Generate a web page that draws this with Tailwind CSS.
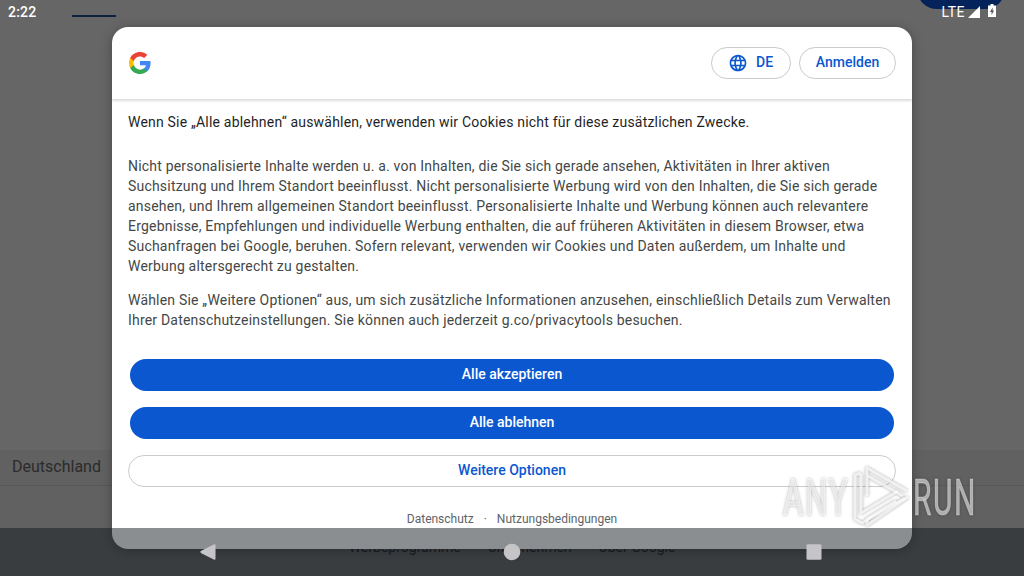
<!DOCTYPE html>
<html lang="de">
<head>
<meta charset="utf-8">
<title>Google</title>
<script src="https://cdn.jsdelivr.net/npm/@tailwindcss/browser@4"></script>
</head>
<body class="relative h-[576px] w-[1024px] overflow-hidden bg-[#666666] font-['Roboto',sans-serif]">
  <!-- Page behind the dialog -->
  <div class="flex h-full flex-col">
    <div class="flex h-[450px] items-start justify-between overflow-hidden">
      <div class="mt-[15px] ml-[72px] h-[2px] w-11 bg-[#0d2143]"></div>
      <div class="-mt-[31px] mr-[19px] h-10 w-[88px] rounded-full bg-[#04235a]"></div>
    </div>
    <div class="flex h-9 items-center border-b border-[#585858] bg-[#616161] px-3 pb-px text-base text-[#2b2b2b]">Deutschland</div>
    <div class="flex grow justify-center gap-[27px] bg-[#616161] pt-[51px] text-sm leading-5 text-[#1c1c1c]">
      <span>Werbeprogramme</span><span>Unternehmen</span><span>Über Google</span>
    </div>
  </div>

  <!-- Consent dialog -->
  <main class="absolute top-[27px] left-[112px] flex h-[522px] w-[800px] flex-col rounded-2xl bg-white shadow-[0_2px_12px_rgba(0,0,0,0.3)]">
    <header class="flex h-[72px] shrink-0 items-center justify-between px-4 shadow-[0_2px_2px_rgba(60,64,67,0.18)] [clip-path:inset(0_0_-6px_0)]">
      <svg class="size-6" viewBox="0 0 24 24">
        <path fill="#4285F4" d="M22.56 12.25c0-.78-.07-1.53-.2-2.25H12v4.26h5.92c-.26 1.37-1.04 2.53-2.21 3.31v2.77h3.57c2.08-1.92 3.28-4.74 3.28-8.09z"/>
        <path fill="#34A853" d="M12 23c2.97 0 5.46-.98 7.28-2.66l-3.57-2.77c-.98.66-2.23 1.06-3.71 1.06-2.86 0-5.29-1.93-6.16-4.53H2.18v2.84C3.99 20.53 7.7 23 12 23z"/>
        <path fill="#FBBC05" d="M5.84 14.09c-.22-.66-.35-1.36-.35-2.09s.13-1.43.35-2.09V7.07H2.18C1.43 8.55 1 10.22 1 12s.43 3.45 1.18 4.93l3.66-2.84z"/>
        <path fill="#EA4335" d="M12 5.38c1.62 0 3.06.56 4.21 1.64l3.15-3.15C17.45 2.09 14.97 1 12 1 7.7 1 3.99 3.47 2.18 7.07l3.66 2.84c.87-2.6 3.3-4.53 6.16-4.53z"/>
      </svg>
      <div class="flex gap-2 text-sm font-medium text-[#0b57d0]">
        <div class="flex h-8 w-20 items-center rounded-full border border-[#c9cbce] pl-4">
          <svg class="size-5" viewBox="0 0 24 24" fill="currentColor"><path d="M11.99 2C6.47 2 2 6.48 2 12s4.47 10 9.99 10C17.52 22 22 17.52 22 12S17.52 2 11.99 2zm6.93 6h-2.95a15.65 15.65 0 0 0-1.38-3.56A8.03 8.03 0 0 1 18.92 8zM12 4.04c.83 1.2 1.48 2.53 1.91 3.96h-3.82c.43-1.43 1.08-2.76 1.91-3.96zM4.26 14C4.1 13.36 4 12.69 4 12s.1-1.36.26-2h3.38c-.08.66-.14 1.32-.14 2s.06 1.34.14 2H4.26zm.82 2h2.95c.32 1.25.78 2.45 1.38 3.56A7.987 7.987 0 0 1 5.08 16zm2.95-8H5.08a7.987 7.987 0 0 1 4.33-3.56A15.65 15.65 0 0 0 8.03 8zM12 19.96c-.83-1.2-1.48-2.53-1.91-3.96h3.82c-.43 1.43-1.08 2.76-1.91 3.96zM14.34 14H9.66c-.09-.66-.16-1.32-.16-2s.07-1.35.16-2h4.68c.09.65.16 1.32.16 2s-.07 1.34-.16 2zm.25 5.56c.6-1.11 1.06-2.31 1.38-3.56h2.95a8.03 8.03 0 0 1-4.33 3.56zM16.36 14c.08-.66.14-1.32.14-2s-.06-1.34-.14-2h3.38c.16.64.26 1.31.26 2s-.1 1.36-.26 2h-3.38z"/></svg>
          <span class="mb-0.5 ml-2">DE</span>
        </div>
        <div class="flex h-8 w-[97px] items-center justify-center rounded-full border border-[#c9cbce] pb-0.5">Anmelden</div>
      </div>
    </header>
    <section class="flex flex-col px-4 pt-[13px] text-sm leading-5 tracking-[0.2px] whitespace-nowrap text-[#444746]">
      <p class="text-[#1f1f1f]">Wenn Sie „Alle ablehnen“ auswählen, verwenden wir Cookies nicht für diese zusätzlichen Zwecke.</p>
      <p class="mt-6">Nicht personalisierte Inhalte werden u. a. von Inhalten, die Sie sich gerade ansehen, Aktivitäten in Ihrer aktiven<br>Suchsitzung und Ihrem Standort beeinflusst. Nicht personalisierte Werbung wird von den Inhalten, die Sie sich gerade<br>ansehen, und Ihrem allgemeinen Standort beeinflusst. Personalisierte Inhalte und Werbung können auch relevantere<br>Ergebnisse, Empfehlungen und individuelle Werbung enthalten, die auf früheren Aktivitäten in diesem Browser, etwa<br>Suchanfragen bei Google, beruhen. Sofern relevant, verwenden wir Cookies und Daten außerdem, um Inhalte und<br>Werbung altersgerecht zu gestalten.</p>
      <p class="mt-3.5">Wählen Sie „Weitere Optionen“ aus, um sich zusätzliche Informationen anzusehen, einschließlich Details zum Verwalten<br>Ihrer Datenschutzeinstellungen. Sie können auch jederzeit g.co/privacytools besuchen.</p>
    </section>
    <div class="mt-[29px] flex flex-col gap-4 px-4 text-sm font-medium">
      <div class="mx-0.5 flex h-8 items-center justify-center rounded-full bg-[#0b57d0] pb-0.5 text-white">Alle akzeptieren</div>
      <div class="mx-0.5 flex h-8 items-center justify-center rounded-full bg-[#0b57d0] pb-0.5 text-white">Alle ablehnen</div>
      <div class="flex h-8 items-center justify-center rounded-full border border-[#c9cbce] pb-0.5 text-[#0b57d0]">Weitere Optionen</div>
    </div>
    <footer class="mt-6 flex justify-center gap-2.5 text-xs leading-4 text-[#5f6368]"><span>Datenschutz</span><span>·</span><span>Nutzungsbedingungen</span></footer>
  </main>

  <!-- Status bar -->
  <div class="absolute inset-x-0 top-0 flex h-6 items-center justify-between pr-7 pl-2 text-sm text-white">
    <span class="font-medium tracking-[0.2px]">2:22</span>
    <div class="flex items-center">
      <span class="tracking-[0.5px]">LTE</span>
      <svg class="ml-[3px] h-3 w-3" viewBox="0 0 12 12"><path d="M12 0v12H0z" fill="#fff"/></svg>
      <svg class="mb-[3px] ml-2 h-[13px] w-2" viewBox="0 0 8 13"><path d="M2.5 0h3v1.4H8V13H0V1.4h2.5z" fill="#fff"/><path d="M4.6 3.5 2 8h1.6v3L6 6.6H4.6z" fill="#555"/></svg>
    </div>
  </div>

  <!-- Android navigation bar -->
  <nav class="absolute inset-x-0 bottom-0 h-12 bg-[#12181e]/49">
    <svg class="h-12 w-full" viewBox="0 0 1024 48" fill="#c5c5c7"><path d="M201.3 22.8 213.8 16.4q1.7-.8 1.7 1v13.2q0 1.8-1.7 1L201.3 25.2q-2-1.2 0-2.4z"/><circle cx="512" cy="24" r="8.3"/><rect x="806.5" y="16.2" width="15" height="15.5" rx="1.2"/></svg>
  </nav>

  <!-- ANY.RUN watermark -->
  <svg class="absolute top-[456px] left-[772px] h-[84px] w-[212px] font-['Roboto',sans-serif] [filter:drop-shadow(0_0_1.5px_rgba(0,0,0,0.45))]" viewBox="772 456 212 84" fill="#fff" fill-opacity=".55" font-size="50">
    <text transform="translate(783 515) scale(.62 1)" stroke="#fff" stroke-opacity=".5" stroke-width="1" textLength="104" lengthAdjust="spacing">ANY</text>
    <text transform="translate(913 515) scale(.6 1)" stroke="#fff" stroke-opacity=".3" stroke-width="1" textLength="104" lengthAdjust="spacing">RUN</text>
    <g fill="none" stroke="#fff" stroke-opacity=".75" stroke-width="3" stroke-linejoin="round">
      <path d="M861 473 855 475V519L862 523 905 498"/>
      <path d="M861 474V513L898 491"/>
      <path d="M867 496V468L907 491"/>
      <path d="M908 497 867 525V519L896 501"/>
      <path d="M868 476 903 496"/>
    </g>
  </svg>
</body>
</html>
